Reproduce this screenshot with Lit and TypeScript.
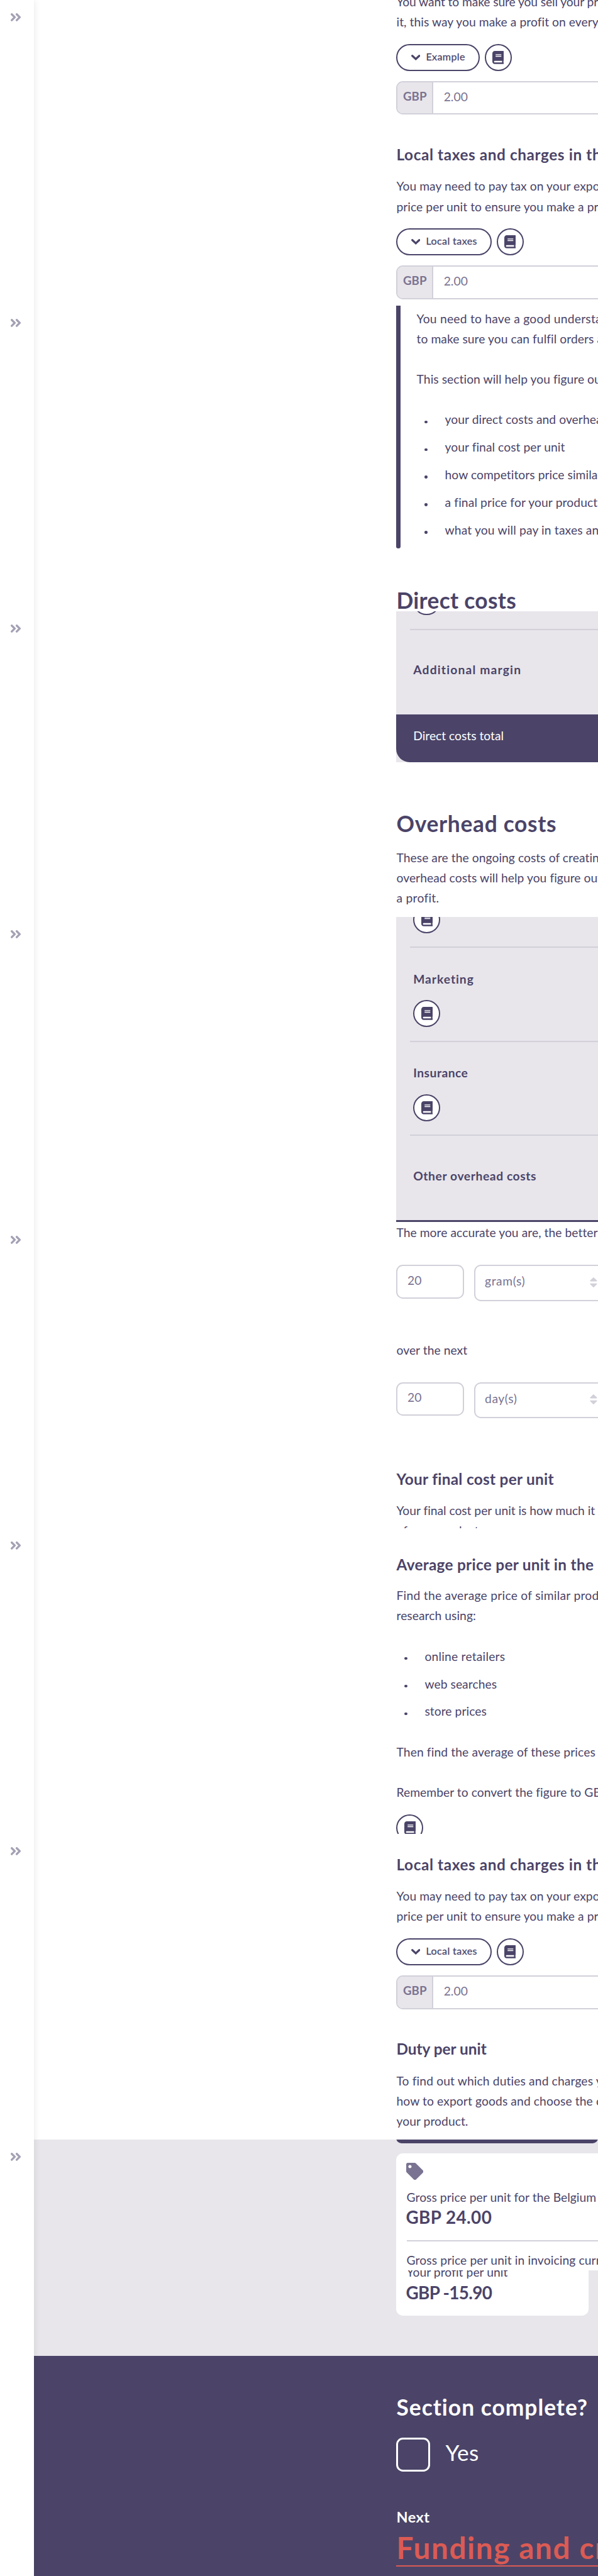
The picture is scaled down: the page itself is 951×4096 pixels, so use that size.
import { LitElement, html, css, svg } from "lit";
import { customElement, property } from "lit/decorators.js";
import { styleMap } from "lit/directives/style-map.js";

const BOOK =
  "M448 360V24c0-13.3-10.7-24-24-24H96C43 0 0 43 0 96v320c0 53 43 96 96 96h328c13.3 0 24-10.7 24-24v-16c0-7.5-3.5-14.3-8.9-18.7-4.2-15.4-4.2-59.3 0-74.7 5.4-4.3 8.9-11.1 8.9-18.6zM128 134c0-3.3 2.7-6 6-6h212c3.3 0 6 2.7 6 6v20c0 3.3-2.7 6-6 6H134c-3.3 0-6-2.7-6-6v-20zm0 64c0-3.3 2.7-6 6-6h212c3.3 0 6 2.7 6 6v20c0 3.3-2.7 6-6 6H134c-3.3 0-6-2.7-6-6v-20zm253.4 250H96c-17.7 0-32-14.3-32-32 0-17.6 14.4-32 32-32h285.4c-1.9 17.1-1.9 46.9 0 64z";
const TAG =
  "M0 252.118V48C0 21.49 21.49 0 48 0h204.118a48 48 0 0 1 33.941 14.059l211.882 211.882c18.745 18.745 18.745 49.137 0 67.882L293.823 497.941c-18.745 18.745-49.137 18.745-67.882 0L14.059 286.059A48 48 0 0 1 0 252.118zM112 64c-26.51 0-48 21.49-48 48s21.49 48 48 48 48-21.49 48-48-21.49-48-48-48z";

/** A run of text with its own tracking, in px. */
const t = (text: string, tracking: number) =>
  html`<span style=${styleMap({ letterSpacing: `${tracking}px` })}>${text}</span>`;

@customElement("book-button")
class BookButton extends LitElement {
  static styles = css`
    :host {
      display: flex;
      box-sizing: border-box;
      width: 80px;
      height: 80px;
      border: 4px solid #4b4468;
      border-radius: 50%;
      background: #fff;
      align-items: center;
      justify-content: center;
    }
    .icon {
      width: 34px;
      height: 39px;
      fill: #4b4468;
    }
  `;
  render() {
    return html`<svg class="icon" viewBox="0 0 448 512">${svg`<path d=${BOOK} />`}</svg>`;
  }
}

@customElement("help-row")
class HelpRow extends LitElement {
  @property() label = "";
  static styles = css`
    :host {
      display: flex;
      gap: 14px;
    }
    .pill {
      box-sizing: border-box;
      height: 80px;
      border: 4px solid #4b4468;
      border-radius: 40px;
      background: #fff;
      padding: 0 40px;
      display: flex;
      align-items: center;
      gap: 17px;
    }
    .chev {
      width: 27px;
      height: 17px;
      fill: none;
      stroke: #4b4468;
      stroke-width: 6;
      stroke-linecap: round;
    }
    .label {
      font-size: 30px;
      line-height: 60px;
      letter-spacing: 0.75px;
      padding-bottom: 5px;
      white-space: nowrap;
      -webkit-text-stroke: 0.5px #4b4468;
    }
  `;
  render() {
    return html`
      <div class="pill">
        <svg class="chev" viewBox="0 0 27 17"><path d="M3.2 3.2 13.5 12.8 23.8 3.2" /></svg>
        <span class="label">${this.label}</span>
      </div>
      <book-button></book-button>
    `;
  }
}

@customElement("money-input")
class MoneyInput extends LitElement {
  static styles = css`
    :host {
      display: flex;
      box-sizing: border-box;
      width: 760px;
      height: 100px;
      border: 4px solid #d2d0d9;
      border-radius: 20px;
      overflow: hidden;
      background: #fff;
      color: #7a7391;
      font-size: 36px;
      line-height: 60px;
    }
    .cur {
      width: 102px;
      border-right: 4px solid #d2d0d9;
      background: #e8e6eb;
      font-weight: 700;
      font-size: 35px;
      padding-top: 11px;
      text-align: center;
    }
    .val {
      padding: 13px 0 0 31px;
    }
  `;
  render() {
    return html`<div class="cur">GBP</div>
      <div class="val">2.00</div>`;
  }
}

@customElement("unit-row")
class UnitRow extends LitElement {
  @property() amount = "";
  @property() unit = "";
  static styles = css`
    :host {
      display: flex;
      align-items: flex-start;
      gap: 30px;
      width: 760px;
      color: #7a7391;
      font-size: 36px;
      line-height: 60px;
    }
    .box {
      box-sizing: border-box;
      border: 4px solid #d2d0d9;
      border-radius: 20px;
      background: #fff;
      padding-left: 29px;
    }
    .num {
      width: 200px;
      height: 100px;
      padding-top: 13px;
    }
    .sel {
      width: 400px;
      height: 108px;
      padding-top: 15px;
      display: flex;
      align-items: flex-start;
      justify-content: space-between;
      padding-right: 29px;
      letter-spacing: 1.1px;
    }
    .sort {
      width: 22px;
      height: 30px;
      margin-top: 18px;
      fill: #d2d0d9;
      stroke: #d2d0d9;
      stroke-width: 3;
      stroke-linejoin: round;
    }
  `;
  render() {
    return html`
      <div class="box num">${this.amount}</div>
      <div class="box sel">
        <span>${this.unit}</span>
        <svg class="sort" viewBox="0 0 22 30">
          <path d="M2 10.5 11 1.8 20 10.5Z" />
          <path d="M2 19.5 11 28.2 20 19.5Z" />
        </svg>
      </div>
    `;
  }
}

@customElement("app-root")
class AppRoot extends LitElement {
  static styles = css`
    :host {
      display: block;
      overflow: hidden;
      width: 951px;
      height: 4096px;
      background: #fff;
    }
    .page {
      zoom: 0.53521;
      display: flex;
      width: 1777px;
      height: 7654px;
      overflow: hidden;
      background: #fff;
      color: #4b4468;
      font: 400 36px/60px Lato, "Open Sans", sans-serif;
    }
    .rail {
      flex: none;
      width: 100px;
      background: #fff;
      box-shadow: 0 0 20px rgba(0, 0, 0, 0.1);
      z-index: 1;
    }
    .stop {
      height: 908px;
      box-sizing: border-box;
      padding: 40px 0 0 32px;
    }
    .stop svg {
      display: block;
      width: 31px;
      height: 24px;
      fill: none;
      stroke: #a5a1b4;
      stroke-width: 6.2;
      stroke-linecap: round;
      stroke-linejoin: round;
    }
    .main {
      flex: 1;
      min-width: 0;
    }
    .frame {
      height: 908px;
      box-sizing: border-box;
      padding-left: 1078px;
      overflow: hidden;
      white-space: nowrap;
      display: flow-root;
      letter-spacing: 0.1px;
    }
    .frame.price {
      height: 389px;
      background: #e8e6eb;
    }
    .frame.end {
      height: 909px;
      background: linear-gradient(#e8e6eb 254px, #4b4468 254px);
      color: #fff;
    }
    p,
    h2,
    h3,
    ul,
    li {
      margin: 0;
      padding: 0;
    }
    p,
    h3,
    li {
      padding-top: 1px;
      margin-bottom: -1px;
    }
    h2 {
      font-size: 66px;
      line-height: 80px;
      letter-spacing: 0.55px;
      padding-top: 2px;
      margin-bottom: -2px;
    }
    h3 {
      font-size: 45.5px;
      line-height: 60px;
      letter-spacing: 0.55px;
    }
    p + p {
      margin-top: 60px;
    }
    h3 + p {
      margin-top: 34px;
    }
    help-row {
      margin-top: 36px;
    }
    money-input {
      margin-top: 30px;
    }
    ul {
      list-style: none;
      margin-top: 60px;
    }
    li {
      display: flex;
      align-items: center;
      padding-left: 24px;
    }
    li::before {
      content: "";
      width: 8px;
      height: 8px;
      border-radius: 50%;
      background: currentColor;
      margin: 13px 52px 0 0;
    }
    li + li {
      margin-top: 22px;
    }
    .up25 {
      margin-top: -25px;
    }
    .mt88 {
      margin-top: 88px;
    }
    .callout {
      display: flex;
      height: 722px;
      margin-bottom: 113px;
    }
    .bar {
      flex: none;
      width: 12px;
      border-radius: 0 0 6px 6px;
      background: #4b4468;
    }
    .ctext {
      flex: none;
      padding: 8px 0 0 48px;
    }
    .table {
      background: #e8e6eb;
      display: flow-root;
      font-weight: 700;
      letter-spacing: 0.9px;
    }
    .row {
      margin-left: 40px;
      padding: 63px 0 40px 10px;
      border-bottom: 4px solid #d2d0d9;
    }
    .row book-button {
      margin-top: 33px;
    }
    .row.tail-a {
      padding-top: 0;
      margin-top: -68px;
    }
    .row.tail-b {
      padding-top: 0;
      margin-top: -32px;
    }
    .tail-a book-button,
    .tail-b book-button {
      margin-top: 0;
    }
    .last {
      padding: 89px 0 101px 50px;
    }
    .total {
      height: 142px;
      box-sizing: border-box;
      padding: 35px 0 0 50px;
      background: #4b4468;
      color: #fff;
      border-bottom-left-radius: 40px;
      font-weight: 400;
      letter-spacing: 0;
    }
    .strip {
      height: 6px;
      background: #4b4468;
    }
    .over {
      margin-top: 143px;
      letter-spacing: 1.3px;
    }
    .over + p {
      margin-top: 31px;
    }
    .units1,
    .units2 {
      margin-top: 66px;
    }
    .next {
      margin-top: 114px;
    }
    .final {
      margin-top: 149px;
    }
    .avg {
      margin-top: 77px;
    }
    .avg + p {
      margin-top: 33px;
    }
    ul + p {
      margin-top: 60px;
    }
    .lone {
      margin-top: 36px;
    }
    .local {
      margin-top: 61px;
    }
    .slab {
      height: 32px;
      margin-top: -20px;
      border-radius: 20px;
      background: #4b4468;
    }
    .card {
      background: #fff;
      color: #4b4468;
    }
    .gross {
      box-sizing: border-box;
      height: 367px;
      margin-top: 30px;
      border-top-left-radius: 20px;
      padding: 27px 0 0 30px;
    }
    .tag {
      display: block;
      width: 51px;
      height: 51px;
      margin-left: -1px;
      fill: #7a7391;
    }
    .cap {
      margin-top: 22px;
    }
    .amt {
      font-size: 52px;
      line-height: 60px;
      font-weight: 700;
      letter-spacing: 0.8px;
      margin: 1px 0 0 -2px;
    }
    .amt.neg {
      letter-spacing: -1.2px;
      margin-top: 2.5px;
    }
    .rule {
      height: 4px;
      margin: 37px 0 26px;
      background: #d2d0d9;
    }
    .profit {
      box-sizing: border-box;
      width: 570px;
      height: 160px;
      margin-top: -26px;
      padding: 1px 0 0 30px;
      border-radius: 0 0 20px 20px;
    }
    .done {
      margin-top: 232px;
      letter-spacing: 1.9px;
    }
    .check {
      display: flex;
      gap: 46px;
      margin-top: 52px;
      font-size: 66px;
      line-height: 80px;
      letter-spacing: 0.6px;
    }
    .check i {
      box-sizing: border-box;
      width: 100px;
      height: 100px;
      border: 6px solid #fff;
      border-radius: 20px;
    }
    .check span {
      padding-top: 5px;
    }
    .nlabel {
      margin-top: 105px;
      font-size: 44px;
      line-height: 60px;
      font-weight: 700;
      letter-spacing: 0.9px;
    }
    .link {
      margin-top: 10px;
      width: 760px;
      font-size: 89px;
      line-height: 100px;
      height: 104px;
      font-weight: 700;
      letter-spacing: 3.05px;
      color: #db5b54;
      border-bottom: 4px solid #db5b54;
    }
  `;

  render() {
    return html`
      <div class="page">
        <nav class="rail">
          ${[0, 1, 2, 3, 4, 5, 6, 7].map(
            () => html`<div class="stop">
              <svg viewBox="0 0 31 24">
                <path d="M3.2 3.2 12 12 3.2 20.8M18 3.2 26.8 12 18 20.8" />
              </svg>
            </div>`
          )}
        </nav>
        <main class="main">
          <section class="frame">
            <p class="up25">
              ${t("You want to make sure you sell your product for more than", -0.2)}<br />it, this way
              you make a profit on every sale.
            </p>
            <help-row label="Example"></help-row>
            <money-input></money-input>
            <h3 class="mt88">${t("Local taxes and charges in the", 1.1)}</h3>
            <p>You may need to pay tax on your export<br />price per unit to ensure you make a profit.</p>
            <help-row label="Local taxes"></help-row>
            <money-input></money-input>
          </section>

          <section class="frame">
            <div class="callout">
              <div class="bar"></div>
              <div class="ctext">
                <p>${t("You need to have a good understanding", 0.43)}<br />to make sure you can fulfil orders and</p>
                <p>This section will help you figure out:</p>
                <ul>
                  <li>your direct costs and overheads</li>
                  <li>your final cost per unit</li>
                  <li>how competitors price similar</li>
                  <li>${t("a final price for your product", 0.22)}</li>
                  <li>${t("what you will pay in taxes and", 0.29)}</li>
                </ul>
              </div>
            </div>
            <h2>Direct costs</h2>
          </section>

          <section class="frame">
            <div class="table">
              <div class="row tail-a"><book-button></book-button></div>
              <div class="last">${t("Additional margin", 2.2)}</div>
              <div class="total">Direct costs total</div>
            </div>
            <h2 class="over">Overhead costs</h2>
            <p>
              These are the ongoing costs of creating<br />overhead costs will help you figure out<br />${t(
                "a profit.",
                0.5
              )}
            </p>
          </section>

          <section class="frame">
            <div class="table">
              <div class="row tail-b"><book-button></book-button></div>
              <div class="row">${t("Marketing", 1.8)}<book-button></book-button></div>
              <div class="row">Insurance<book-button></book-button></div>
              <div class="last">${t("Other overhead costs", 1.1)}</div>
              <div class="strip"></div>
            </div>
          </section>

          <section class="frame">
            <p>The more accurate you are, the better</p>
            <unit-row class="units1" amount="20" unit="gram(s)"></unit-row>
            <p class="next">over the next</p>
            <unit-row class="units2" amount="20" unit="day(s)"></unit-row>
            <h3 class="final">Your final cost per unit</h3>
            <p>${t("Your final cost per unit is how much it", -0.05)}<br />of your product</p>
          </section>

          <section class="frame">
            <h3 class="avg">Average price per unit in the</h3>
            <p>${t("Find the average price of similar products", 0.5)}<br />research using:</p>
            <ul>
              <li>${t("online retailers", 0.4)}</li>
              <li>web searches</li>
              <li>store prices</li>
            </ul>
            <p>${t("Then find the average of these prices", 0.22)}</p>
            <p>Remember to convert the figure to GBP</p>
            <book-button class="lone"></book-button>
          </section>

          <section class="frame">
            <h3 class="local">${t("Local taxes and charges in the", 1.1)}</h3>
            <p>You may need to pay tax on your export<br />price per unit to ensure you make a profit.</p>
            <help-row label="Local taxes"></help-row>
            <money-input></money-input>
            <h3 class="mt88">${t("Duty per unit", 0)}</h3>
            <p>
              ${t("To find out which duties and charges you", 0.23)}<br />${t(
                "how to export goods and choose the country",
                0.2
              )}<br />your product.
            </p>
          </section>

          <section class="frame price">
            <div class="slab"></div>
            <div class="card gross">
              <svg class="tag" viewBox="0 0 512 512"><path d=${TAG} /></svg>
              <div class="cap">Gross price per unit for the Belgium</div>
              <div class="amt">GBP 24.00</div>
              <div class="rule"></div>
              <div>${t("Gross price per unit in invoicing currency", 0.21)}</div>
            </div>
          </section>

          <section class="frame end">
            <div class="card profit">
              <div>Your profit per unit</div>
              <div class="amt neg">GBP -15.90</div>
            </div>
            <h2 class="done">Section complete?</h2>
            <div class="check"><i></i><span>Yes</span></div>
            <div class="nlabel">Next</div>
            <div class="link">Funding and credit</div>
          </section>
        </main>
      </div>
    `;
  }
}
